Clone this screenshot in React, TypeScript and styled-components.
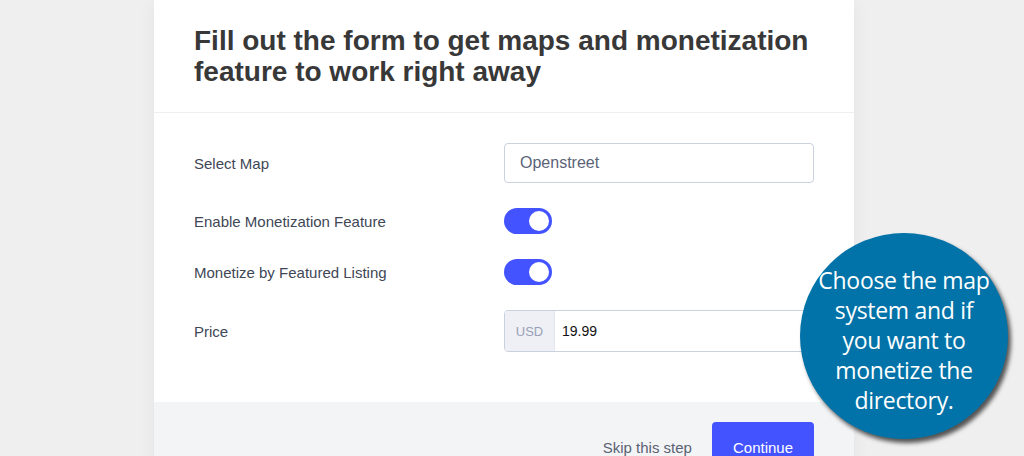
import React from "react";
import styled, { createGlobalStyle } from "styled-components";

const Global = createGlobalStyle`
  html, body { margin: 0; padding: 0; }
  body {
    background: #efefef;
    font-family: "Liberation Sans", Arial, sans-serif;
    overflow: hidden;
  }
`;

const Page = styled.div`
  position: relative;
  width: 1024px;
  height: 456px;
  overflow: hidden;
  padding-left: 154px;
  box-sizing: border-box;
`;

const Card = styled.div`
  width: 700px;
  background: #ffffff;
  box-shadow: 0 0 18px rgba(0, 0, 0, 0.05);
  display: flex;
  flex-direction: column;
`;

const Header = styled.div`
  padding: 25px 40px 25px 40px;
  border-bottom: 1px solid #eceef2;
`;

const Title = styled.h1`
  margin: 0;
  font-size: 28px;
  line-height: 31px;
  font-weight: 700;
  color: #383838;
`;

const Body = styled.div`
  padding: 30px 40px 50px 40px;
  display: grid;
  grid-template-columns: 1fr 310px;
  row-gap: 25px;
  align-items: center;
`;

const Label = styled.div`
  font-size: 15px;
  color: #404756;
`;

const Field = styled.div`
  display: flex;
  align-items: center;
`;

const SelectBox = styled.div`
  width: 100%;
  height: 40px;
  box-sizing: border-box;
  border: 1px solid #c9d1dd;
  border-radius: 4px;
  padding: 0 15px;
  display: flex;
  align-items: center;
  font-size: 16px;
  color: #5a6378;
`;

const Toggle = styled.div<{ $on: boolean }>`
  position: relative;
  width: 48px;
  height: 26px;
  border-radius: 13px;
  background: ${(p) => (p.$on ? "#4353ff" : "#c9d1dd")};
  &::after {
    content: "";
    position: absolute;
    top: 3px;
    left: ${(p) => (p.$on ? "25px" : "3px")};
    width: 20px;
    height: 20px;
    border-radius: 50%;
    background: #ffffff;
  }
`;

const PriceBox = styled.div`
  width: 100%;
  height: 42px;
  box-sizing: border-box;
  border: 1px solid #c9d1dd;
  border-radius: 4px;
  display: flex;
  overflow: hidden;
`;

const Prefix = styled.div`
  width: 49px;
  background: #eef0f5;
  display: flex;
  align-items: center;
  justify-content: center;
  font-size: 13px;
  color: #9aa1b6;
  border-right: 1px solid #e3e6ee;
`;

const PriceValue = styled.div`
  flex: 1;
  display: flex;
  align-items: center;
  padding-left: 7px;
  font-size: 14px;
  color: #111111;
`;

const Footer = styled.div`
  background: #f3f4f6;
  padding: 20px 40px 20px 40px;
  display: flex;
  justify-content: flex-end;
  align-items: center;
  gap: 20px;
`;

const SkipLink = styled.span`
  font-size: 15px;
  color: #5a6272;
`;

const PrimaryButton = styled.button`
  height: 50px;
  padding: 0 21px;
  border: none;
  border-radius: 4px;
  background: #4353ff;
  color: #ffffff;
  font-family: "Liberation Sans", Arial, sans-serif;
  font-size: 15px;
`;

const Bubble = styled.div`
  position: absolute;
  left: 800px;
  top: 233px;
  width: 208px;
  height: 206px;
  border-radius: 50%;
  background: #0273a8;
  box-shadow: 3px 4px 4px rgba(0, 0, 0, 0.65);
  display: flex;
  flex-direction: column;
  align-items: center;
  justify-content: center;
  color: #ffffff;
  font-family: "Open Sans", sans-serif;
  font-size: 23px;
  line-height: 30px;
  letter-spacing: -0.3px;
  padding-top: 8px;
  box-sizing: border-box;
`;

const BubbleLine = styled.span`
  display: block;
  white-space: nowrap;
`;

export default function App() {
  const rows = [
    { label: "Select Map", kind: "select" },
    { label: "Enable Monetization Feature", kind: "toggle" },
    { label: "Monetize by Featured Listing", kind: "toggle" },
    { label: "Price", kind: "price" },
  ];
  return (
    <>
      <Global />
      <Page>
        <Card>
          <Header>
            <Title>
              Fill out the form to get maps and monetization
              <br />
              feature to work right away
            </Title>
          </Header>
          <Body>
            {rows.map((r) => (
              <React.Fragment key={r.label}>
                <Label>{r.label}</Label>
                <Field>
                  {r.kind === "select" && <SelectBox>Openstreet</SelectBox>}
                  {r.kind === "toggle" && <Toggle $on />}
                  {r.kind === "price" && (
                    <PriceBox>
                      <Prefix>USD</Prefix>
                      <PriceValue>19.99</PriceValue>
                    </PriceBox>
                  )}
                </Field>
              </React.Fragment>
            ))}
          </Body>
          <Footer>
            <SkipLink>Skip this step</SkipLink>
            <PrimaryButton>Continue</PrimaryButton>
          </Footer>
        </Card>
        <Bubble>
          <BubbleLine>Choose the map</BubbleLine>
          <BubbleLine>system and if</BubbleLine>
          <BubbleLine>you want to</BubbleLine>
          <BubbleLine>monetize the</BubbleLine>
          <BubbleLine>directory.</BubbleLine>
        </Bubble>
      </Page>
    </>
  );
}
